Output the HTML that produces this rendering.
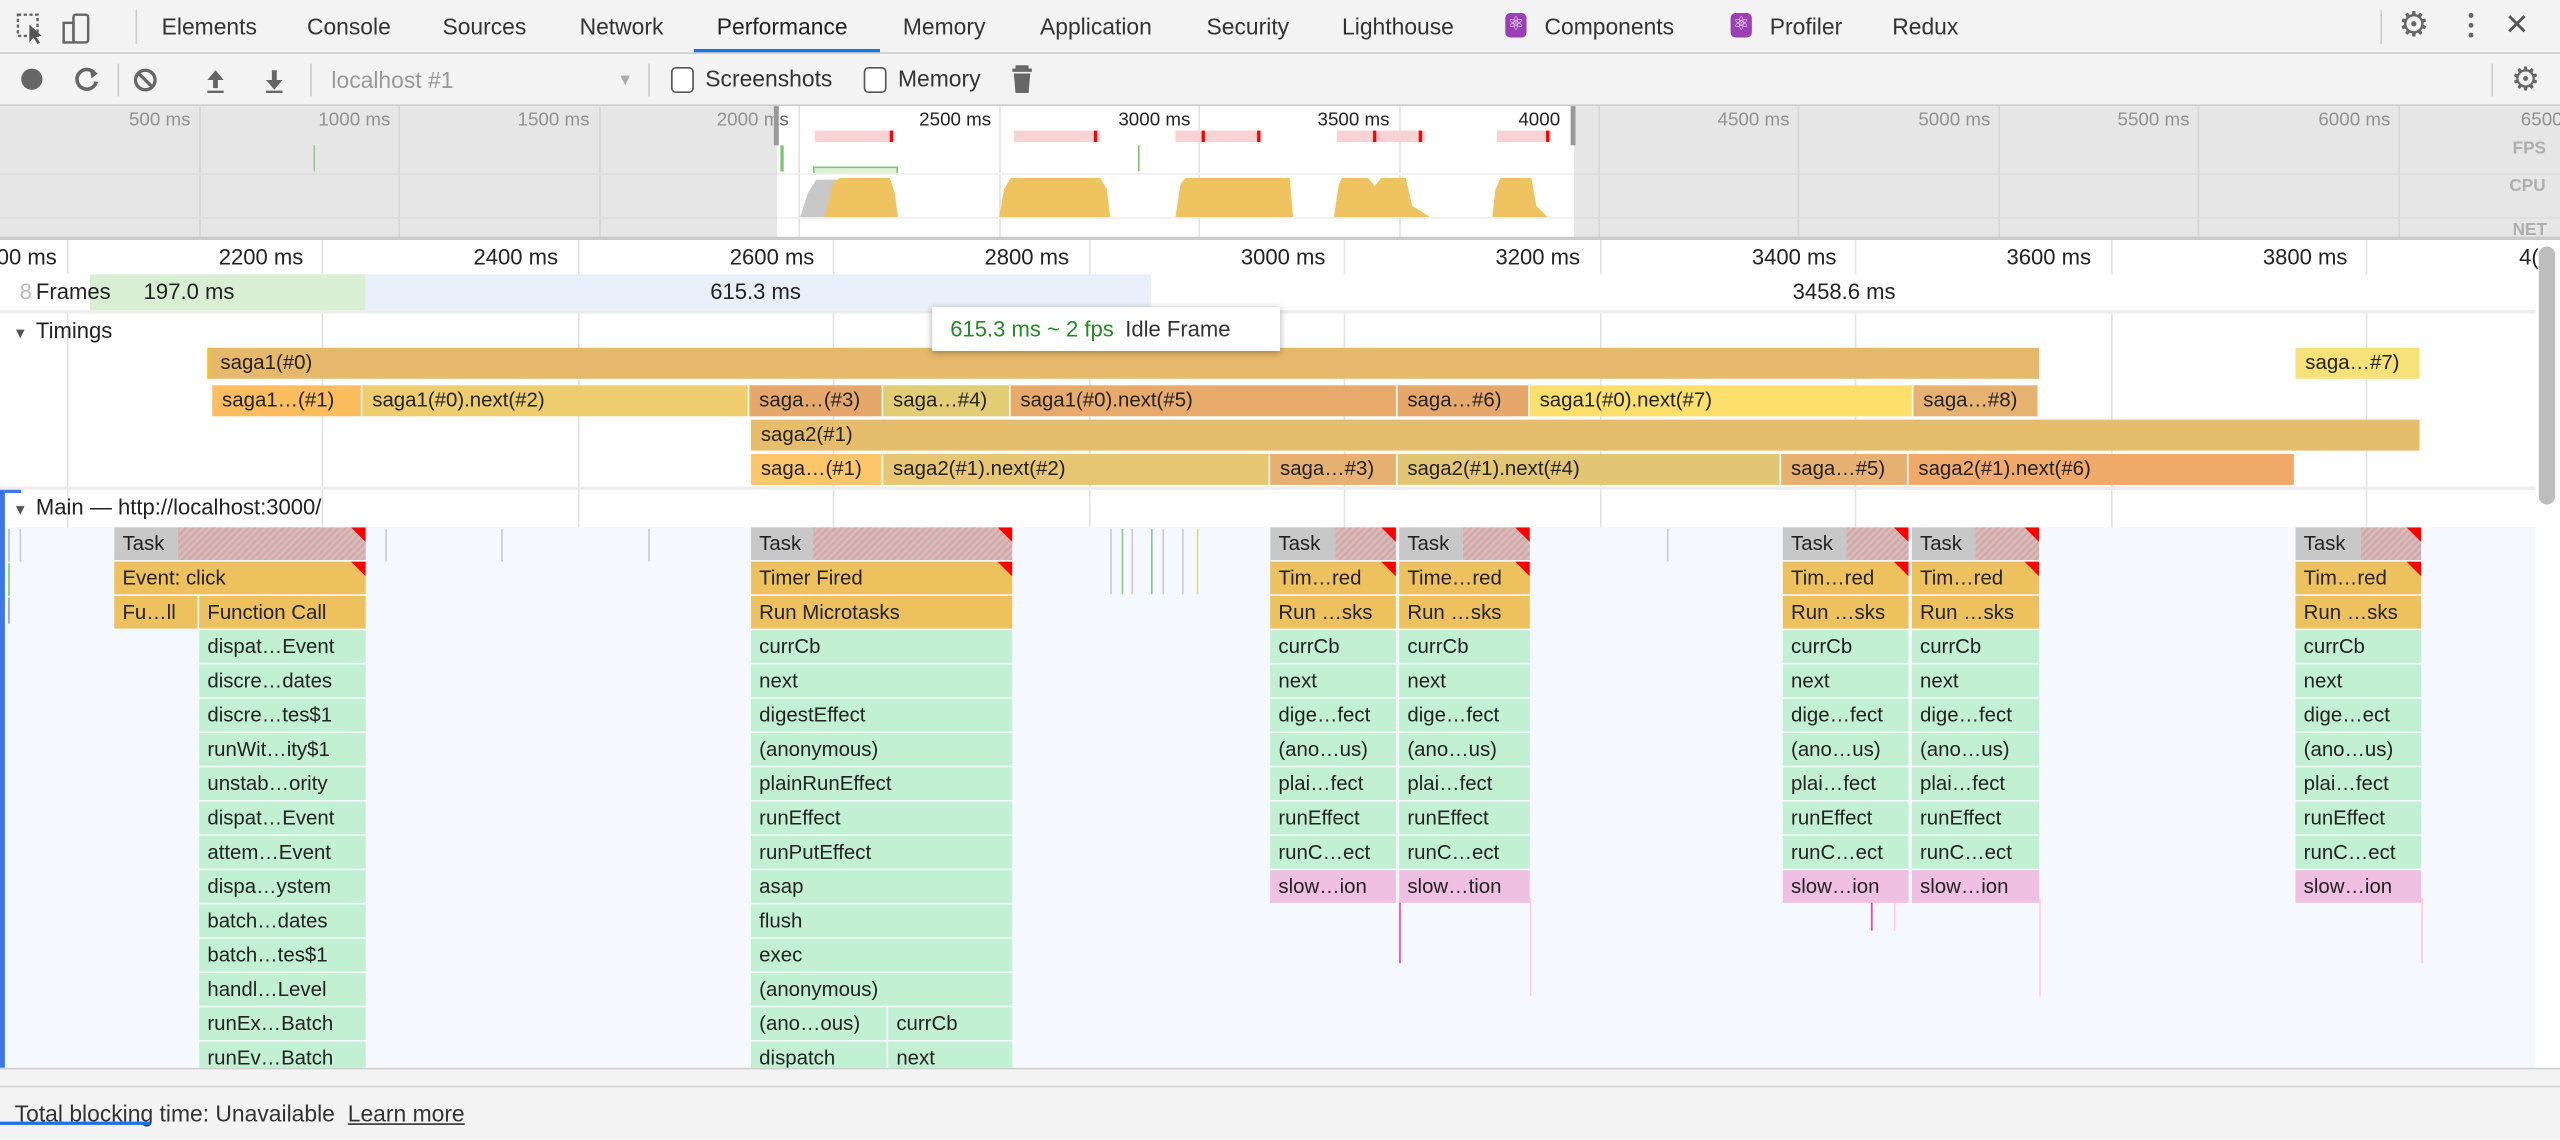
<!DOCTYPE html>
<html><head><meta charset="utf-8"><style>
html,body{margin:0;padding:0;width:2560px;height:1140px;overflow:hidden;background:#fff}
#w{position:absolute;left:0;top:0;width:1568px;height:698px;transform:scale(1.63265);transform-origin:0 0;font-family:"Liberation Sans",sans-serif;overflow:hidden;background:#fff}
.a{position:absolute}
.tab{position:absolute;top:0;height:32px;line-height:32px;font-size:14px;color:#333}
.g{position:absolute;width:1px;background:#e2e2e2}
.b{position:absolute;height:20px;line-height:20px;font-size:12.5px;padding-left:5px;box-sizing:border-box;overflow:hidden;white-space:nowrap;color:#222}
.t{background:#c8c8c8}
.h{background:repeating-linear-gradient(135deg,#e1a2a2 0 1.5px,#c9c2c2 1.5px 3px)}
.y{background:#edc15e}
.gr{background:#c2f0d3}
.p{background:#efc0e2}
.rt{position:absolute;right:0;top:0;width:0;height:0;border-left:9px solid transparent;border-top:9px solid #f00}
.ol{position:absolute;top:68px;font-size:11.5px;color:#666}
.tl{position:absolute;top:150px;font-size:13.5px;color:#222}
.ti{position:absolute;height:19px;line-height:19px;font-size:12.5px;padding-left:6px;box-sizing:border-box;overflow:hidden;white-space:nowrap;color:#222;border-right:1px solid #fff}
</style></head><body><div id="w">
<!-- tab bar -->
<div class="a" style="left:0;top:0;width:1568px;height:32px;background:#f3f3f3;border-bottom:1px solid #cbcbcb"></div>
<svg class="a" style="left:8px;top:7px" width="60" height="20"><rect x="3" y="2" width="12" height="13" fill="none" stroke="#666" stroke-width="1.5" stroke-dasharray="2 1.5"/><path d="M10 8 L10 19 L12.5 16 L15 20 L16.5 19 L14 15.5 L17.5 15 Z" fill="#555"/><rect x="37" y="2" width="9" height="17" rx="1.5" fill="none" stroke="#666" stroke-width="1.5"/><rect x="31" y="7" width="6" height="12" fill="none" stroke="#666" stroke-width="1.5"/></svg>
<div class="a" style="left:83px;top:6px;width:1px;height:21px;background:#ccc"></div>
<div class="tab" style="left:99px">Elements</div>
<div class="tab" style="left:188px">Console</div>
<div class="tab" style="left:271px">Sources</div>
<div class="tab" style="left:355px">Network</div>
<div class="tab" style="left:439px;color:#222">Performance</div>
<div class="a" style="left:425px;top:30px;width:114px;height:2px;background:#1a73e8"></div>
<div class="tab" style="left:553px">Memory</div>
<div class="tab" style="left:637px">Application</div>
<div class="tab" style="left:739px">Security</div>
<div class="tab" style="left:822px">Lighthouse</div>
<div class="a" style="left:922px;top:8px;width:13px;height:15px;border-radius:3px;background:#9b3fb5;color:#fff;font-size:11px;line-height:15px;text-align:center">⚛</div>
<div class="tab" style="left:946px">Components</div>
<div class="a" style="left:1060px;top:8px;width:13px;height:15px;border-radius:3px;background:#9b3fb5;color:#fff;font-size:11px;line-height:15px;text-align:center">⚛</div>
<div class="tab" style="left:1084px">Profiler</div>
<div class="tab" style="left:1159px">Redux</div>
<div class="a" style="left:1458px;top:6px;width:1px;height:21px;background:#ccc"></div>
<div class="a" style="left:1469px;top:3px;font-size:21px;color:#666">⚙</div>
<div class="a" style="left:1512px;top:8px;width:3px;height:3px;background:#666;border-radius:2px;box-shadow:0 6px 0 #666,0 12px 0 #666"></div>
<div class="a" style="left:1534px;top:5px;font-size:18px;color:#555">✕</div>
<!-- toolbar -->
<div class="a" style="left:0;top:33px;width:1568px;height:31px;background:#f3f3f3;border-bottom:1px solid #cbcbcb"></div>
<div class="a" style="left:13px;top:42px;width:13px;height:13px;border-radius:50%;background:#666"></div>
<svg class="a" style="left:45px;top:40px" width="140" height="18"><path d="M13 5 A6 6 0 1 0 14 10" fill="none" stroke="#666" stroke-width="2.2"/><path d="M10 2 L15 5 L11 8Z" fill="#666"/><circle cx="44" cy="9" r="6" fill="none" stroke="#666" stroke-width="2"/><path d="M40 5 L48 13" stroke="#666" stroke-width="2"/><path d="M87 3 L82 9 L85.5 9 L85.5 14 L88.5 14 L88.5 9 L92 9Z M82 15.5 h10 v1.5 h-10z" fill="#666"/><path d="M123 15 L118 9 L121.5 9 L121.5 3 L124.5 3 L124.5 9 L128 9Z M118 15.5 h10 v1.5 h-10z" fill="#666"/></svg>
<div class="a" style="left:72px;top:39px;width:1px;height:20px;background:#ccc"></div>
<div class="a" style="left:190px;top:39px;width:1px;height:20px;background:#ccc"></div>
<div class="a" style="left:203px;top:41px;font-size:14px;color:#999">localhost #1</div>
<div class="a" style="left:378px;top:44px;font-size:10px;color:#aaa">▼</div>
<div class="a" style="left:397px;top:39px;width:1px;height:20px;background:#ccc"></div>
<div class="a" style="left:411px;top:41px;width:12px;height:14px;border:1px solid #555;border-radius:3px;background:#fff"></div>
<div class="a" style="left:432px;top:40px;font-size:14px;color:#333">Screenshots</div>
<div class="a" style="left:529px;top:41px;width:12px;height:14px;border:1px solid #555;border-radius:3px;background:#fff"></div>
<div class="a" style="left:550px;top:40px;font-size:14px;color:#333">Memory</div>
<svg class="a" style="left:620px;top:39px" width="14" height="20"><rect x="2" y="1" width="8" height="2" fill="#666"/><rect x="0" y="3" width="12" height="2" fill="#666"/><path d="M1 6 h10 l-1 12 h-8z" fill="#666"/></svg>
<div class="a" style="left:1526px;top:39px;width:1px;height:20px;background:#ccc"></div>
<div class="a" style="left:1538px;top:36px;font-size:20px;color:#666">⚙</div>
<!-- overview -->
<div class="a" style="left:0;top:65px;width:1568px;height:81px;background:#fff"></div>
<div class="g" style="left:122px;top:65px;height:81px"></div><div class="g" style="left:244px;top:65px;height:81px"></div><div class="g" style="left:367px;top:65px;height:81px"></div><div class="g" style="left:489px;top:65px;height:81px"></div><div class="g" style="left:612px;top:65px;height:81px"></div><div class="g" style="left:734px;top:65px;height:81px"></div><div class="g" style="left:857px;top:65px;height:81px"></div><div class="g" style="left:979px;top:65px;height:81px"></div><div class="g" style="left:1101px;top:65px;height:81px"></div><div class="g" style="left:1224px;top:65px;height:81px"></div><div class="g" style="left:1346px;top:65px;height:81px"></div><div class="g" style="left:1469px;top:65px;height:81px"></div>
<div class="ol" style="left:79px">500 ms</div><div class="ol" style="left:195px">1000 ms</div><div class="ol" style="left:317px">1500 ms</div><div class="ol" style="left:439px">2000 ms</div><div class="ol" style="left:563px;color:#222">2500 ms</div><div class="ol" style="left:685px;color:#222">3000 ms</div><div class="ol" style="left:807px;color:#222">3500 ms</div><div class="ol" style="left:930px;color:#222">4000</div><div class="ol" style="left:1052px">4500 ms</div><div class="ol" style="left:1175px">5000 ms</div><div class="ol" style="left:1297px">5500 ms</div><div class="ol" style="left:1420px">6000 ms</div><div class="ol" style="left:1544px">6500</div>
<!-- fps red bars -->
<div class="a" style="left:499px;top:80px;width:49px;height:7px;background:#f8d2d4"></div><div class="a" style="left:545px;top:80px;width:2px;height:7px;background:#f00"></div>
<div class="a" style="left:621px;top:80px;width:53px;height:7px;background:#f8d2d4"></div><div class="a" style="left:670px;top:80px;width:2px;height:7px;background:#f00"></div>
<div class="a" style="left:720px;top:80px;width:53px;height:7px;background:#f8d2d4"></div><div class="a" style="left:736px;top:80px;width:2px;height:7px;background:#f00"></div><div class="a" style="left:770px;top:80px;width:2px;height:7px;background:#f00"></div>
<div class="a" style="left:819px;top:80px;width:54px;height:7px;background:#f8d2d4"></div><div class="a" style="left:841px;top:80px;width:2px;height:7px;background:#f00"></div><div class="a" style="left:869px;top:80px;width:2px;height:7px;background:#f00"></div>
<div class="a" style="left:917px;top:80px;width:33px;height:7px;background:#f8d2d4"></div><div class="a" style="left:947px;top:80px;width:2px;height:7px;background:#f00"></div>
<div class="a" style="left:192px;top:89px;width:1px;height:16px;background:#7bc86a"></div>
<div class="a" style="left:478px;top:89px;width:2px;height:16px;background:#7bc86a"></div>
<div class="a" style="left:697px;top:89px;width:1px;height:16px;background:#7bc86a"></div>
<div class="a" style="left:498px;top:102px;width:50px;height:4px;border:1px solid #7bc86a;border-bottom:none;background:#dff2d9"></div>
<div class="a" style="left:0;top:106px;width:1568px;height:1px;background:#eee"></div>
<div class="a" style="left:0;top:133px;width:1568px;height:1px;background:#eee"></div>
<!-- cpu -->
<svg class="a" style="left:0;top:108px" width="1568" height="26"><path d="M490 25 L495 10 L500 2 L514 2 L514 25Z" fill="#c8c8c8"/><path d="M505 25 L510 5 L514 1 L545 1 L548 10 L550 25Z" fill="#efc35f"/><path d="M612 25 L615 8 L619 1 L674 1 L678 8 L680 25Z" fill="#efc35f"/><path d="M720 25 L723 5 L726 1 L790 1 L792 25Z" fill="#efc35f"/><path d="M817 25 L820 5 L822 1 L838 1 L842 6 L846 1 L861 1 L865 18 L876 25Z" fill="#efc35f"/><path d="M914 25 L916 8 L919 1 L938 1 L941 18 L948 25Z" fill="#efc35f"/></svg>
<div class="a" style="left:1539px;top:85px;font-size:10.5px;font-weight:bold;color:#999">FPS</div>
<div class="a" style="left:1537px;top:108px;font-size:10.5px;font-weight:bold;color:#999">CPU</div>
<div class="a" style="left:1539px;top:135px;font-size:10.5px;font-weight:bold;color:#999">NET</div>
<!-- dim overlays -->
<div class="a" style="left:0;top:65px;width:476px;height:81px;background:rgba(200,200,200,0.45)"></div>
<div class="a" style="left:964px;top:65px;width:604px;height:81px;background:rgba(200,200,200,0.45)"></div>
<div class="a" style="left:474px;top:65px;width:3px;height:24px;background:#999"></div>
<div class="a" style="left:962px;top:65px;width:3px;height:24px;background:#999"></div>
<div class="a" style="left:0;top:145px;width:1568px;height:2px;background:#cbcbcb"></div>
<!-- main area gridlines -->
<div class="g" style="left:41px;top:147px;height:508px"></div><div class="g" style="left:197px;top:147px;height:508px"></div><div class="g" style="left:354px;top:147px;height:508px"></div><div class="g" style="left:510px;top:147px;height:508px"></div><div class="g" style="left:667px;top:147px;height:508px"></div><div class="g" style="left:823px;top:147px;height:508px"></div><div class="g" style="left:980px;top:147px;height:508px"></div><div class="g" style="left:1136px;top:147px;height:508px"></div><div class="g" style="left:1293px;top:147px;height:508px"></div><div class="g" style="left:1449px;top:147px;height:508px"></div>
<div class="tl" style="left:-2px">00 ms</div><div class="tl" style="left:134px">2200 ms</div><div class="tl" style="left:290px">2400 ms</div><div class="tl" style="left:447px">2600 ms</div><div class="tl" style="left:603px">2800 ms</div><div class="tl" style="left:760px">3000 ms</div><div class="tl" style="left:916px">3200 ms</div><div class="tl" style="left:1073px">3400 ms</div><div class="tl" style="left:1229px">3600 ms</div><div class="tl" style="left:1386px">3800 ms</div><div class="tl" style="left:1543px">4(</div>
<!-- frames -->
<div class="a" style="left:0;top:168px;width:1553px;height:22px;background:#fff"></div>
<div class="a" style="left:55px;top:168px;width:169px;height:22px;background:#d8efd4"></div>
<div class="a" style="left:224px;top:168px;width:481px;height:22px;background:#e9f0fb"></div>
<div class="a" style="left:88px;top:171px;font-size:13.5px;color:#222">197.0 ms</div>
<div class="a" style="left:435px;top:171px;font-size:13.5px;color:#222">615.3 ms</div>
<div class="a" style="left:1098px;top:171px;font-size:13.5px;color:#222">3458.6 ms</div>
<div class="a" style="left:3px;top:168px;width:52px;height:22px;background:#fff"></div>
<div class="a" style="left:12px;top:171px;font-size:13.5px;color:#bbb">8</div>
<div class="a" style="left:22px;top:171px;font-size:13.5px;color:#222">Frames</div>
<div class="a" style="left:0;top:190px;width:1553px;height:2px;background:#ececec"></div>
<!-- timings -->
<div class="a" style="left:8px;top:199px;font-size:9px;color:#555">▼</div>
<div class="a" style="left:22px;top:195px;font-size:13.5px;color:#222">Timings</div>
<div class="ti" style="left:127px;top:213px;width:1123px;background:#e6b86b;border-left:2px solid #f0c030">saga1(#0)</div>
<div class="ti" style="left:1406px;top:213px;width:77px;background:#f7e27a">saga…#7)</div>
<div class="ti" style="left:130px;top:236px;width:92px;background:#fcbd5f">saga1…(#1)</div>
<div class="ti" style="left:222px;top:236px;width:237px;background:#edcd6e">saga1(#0).next(#2)</div>
<div class="ti" style="left:459px;top:236px;width:82px;background:#e6a86a">saga…(#3)</div>
<div class="ti" style="left:541px;top:236px;width:78px;background:#e2cc74">saga…#4)</div>
<div class="ti" style="left:619px;top:236px;width:237px;background:#e7aa6b">saga1(#0).next(#5)</div>
<div class="ti" style="left:856px;top:236px;width:81px;background:#e6a86a">saga…#6)</div>
<div class="ti" style="left:937px;top:236px;width:235px;background:#fde06b">saga1(#0).next(#7)</div>
<div class="ti" style="left:1172px;top:236px;width:77px;background:#e6b270">saga…#8)</div>
<div class="ti" style="left:460px;top:257px;width:1023px;background:#e6bd6b">saga2(#1)</div>
<div class="ti" style="left:460px;top:278px;width:81px;background:#fdc66b">saga…(#1)</div>
<div class="ti" style="left:541px;top:278px;width:237px;background:#e6c672">saga2(#1).next(#2)</div>
<div class="ti" style="left:778px;top:278px;width:78px;background:#e6b070">saga…#3)</div>
<div class="ti" style="left:856px;top:278px;width:235px;background:#e2c674">saga2(#1).next(#4)</div>
<div class="ti" style="left:1091px;top:278px;width:78px;background:#e6b070">saga…#5)</div>
<div class="ti" style="left:1169px;top:278px;width:237px;background:#f0a968">saga2(#1).next(#6)</div>
<!-- tooltip -->
<div class="a" style="left:571px;top:188px;width:213px;height:27px;background:#fff;box-shadow:0 1px 4px rgba(0,0,0,0.35);font-size:13.5px;line-height:27px;white-space:nowrap"><span style="margin-left:11px;color:#228b22">615.3 ms ~ 2 fps</span><span style="margin-left:7px;color:#333">Idle Frame</span></div>
<div class="a" style="left:0;top:298px;width:1553px;height:2px;background:#ececec"></div>
<!-- main -->
<div class="a" style="left:8px;top:307px;font-size:9px;color:#555">▼</div>
<div class="a" style="left:22px;top:303px;font-size:13.5px;color:#222">Main — http://localhost:3000/</div>
<div class="a" style="left:0;top:323px;width:1553px;height:332px;background:#f5f8fd"></div>
<div class="a" style="left:0;top:300px;width:3px;height:355px;background:#3b78e7"></div>
<div class="a" style="left:3px;top:300px;width:10px;height:2px;background:#3b78e7"></div>
<!-- small ticks -->
<div class="a" style="left:5px;top:324px;width:1px;height:20px;background:#bbb"></div><div class="a" style="left:12px;top:324px;width:1px;height:20px;background:#ccc"></div><div class="a" style="left:5px;top:345px;width:1px;height:20px;background:#7bc86a"></div><div class="a" style="left:5px;top:366px;width:1px;height:16px;background:#99c"></div>
<div class="a" style="left:236px;top:324px;width:1px;height:20px;background:#ccc"></div><div class="a" style="left:307px;top:324px;width:1px;height:20px;background:#ccc"></div><div class="a" style="left:397px;top:324px;width:1px;height:20px;background:#ccc"></div>
<div class="a" style="left:680px;top:324px;width:1px;height:40px;background:#ccc"></div><div class="a" style="left:687px;top:324px;width:1px;height:40px;background:#8c8"></div><div class="a" style="left:693px;top:324px;width:1px;height:40px;background:#ccc"></div><div class="a" style="left:705px;top:324px;width:1px;height:40px;background:#8c8"></div><div class="a" style="left:712px;top:324px;width:1px;height:40px;background:#ccc"></div><div class="a" style="left:724px;top:324px;width:1px;height:40px;background:#ccc"></div><div class="a" style="left:733px;top:324px;width:1px;height:40px;background:#dd8"></div><div class="a" style="left:1021px;top:324px;width:1px;height:20px;background:#ccc"></div>
<div class="a" style="left:857px;top:550px;width:1px;height:40px;background:#f3c"></div><div class="a" style="left:937px;top:550px;width:1px;height:60px;background:#fcd"></div><div class="a" style="left:1146px;top:550px;width:1px;height:20px;background:#f3c"></div><div class="a" style="left:1160px;top:550px;width:1px;height:20px;background:#fcd"></div><div class="a" style="left:1249px;top:550px;width:1px;height:60px;background:#fcd"></div><div class="a" style="left:1483px;top:550px;width:1px;height:40px;background:#fcd"></div>
<!-- column A -->
<div class="b t" style="left:70px;top:323px;width:39px">Task</div><div class="b h" style="left:109px;top:323px;width:115px"><div class="rt"></div></div>
<div class="b y" style="left:70px;top:344px;width:154px">Event: click<div class="rt"></div></div>
<div class="b y" style="left:70px;top:365px;width:51px">Fu…ll</div><div class="b y" style="left:122px;top:365px;width:102px">Function Call</div>
<div class="b gr" style="left:122px;top:386px;width:102px">dispat…Event</div>
<div class="b gr" style="left:122px;top:407px;width:102px">discre…dates</div>
<div class="b gr" style="left:122px;top:428px;width:102px">discre…tes$1</div>
<div class="b gr" style="left:122px;top:449px;width:102px">runWit…ity$1</div>
<div class="b gr" style="left:122px;top:470px;width:102px">unstab…ority</div>
<div class="b gr" style="left:122px;top:491px;width:102px">dispat…Event</div>
<div class="b gr" style="left:122px;top:512px;width:102px">attem…Event</div>
<div class="b gr" style="left:122px;top:533px;width:102px">dispa…ystem</div>
<div class="b gr" style="left:122px;top:554px;width:102px">batch…dates</div>
<div class="b gr" style="left:122px;top:575px;width:102px">batch…tes$1</div>
<div class="b gr" style="left:122px;top:596px;width:102px">handl…Level</div>
<div class="b gr" style="left:122px;top:617px;width:102px">runEx…Batch</div>
<div class="b gr" style="left:122px;top:638px;width:102px">runEv…Batch</div>
<!-- column B -->
<div class="b t" style="left:460px;top:323px;width:38px">Task</div><div class="b h" style="left:498px;top:323px;width:122px"><div class="rt"></div></div>
<div class="b y" style="left:460px;top:344px;width:160px">Timer Fired<div class="rt"></div></div>
<div class="b y" style="left:460px;top:365px;width:160px">Run Microtasks</div>
<div class="b gr" style="left:460px;top:386px;width:160px">currCb</div>
<div class="b gr" style="left:460px;top:407px;width:160px">next</div>
<div class="b gr" style="left:460px;top:428px;width:160px">digestEffect</div>
<div class="b gr" style="left:460px;top:449px;width:160px">(anonymous)</div>
<div class="b gr" style="left:460px;top:470px;width:160px">plainRunEffect</div>
<div class="b gr" style="left:460px;top:491px;width:160px">runEffect</div>
<div class="b gr" style="left:460px;top:512px;width:160px">runPutEffect</div>
<div class="b gr" style="left:460px;top:533px;width:160px">asap</div>
<div class="b gr" style="left:460px;top:554px;width:160px">flush</div>
<div class="b gr" style="left:460px;top:575px;width:160px">exec</div>
<div class="b gr" style="left:460px;top:596px;width:160px">(anonymous)</div>
<div class="b gr" style="left:460px;top:617px;width:83px">(ano…ous)</div><div class="b gr" style="left:544px;top:617px;width:76px">currCb</div>
<div class="b gr" style="left:460px;top:638px;width:83px">dispatch</div><div class="b gr" style="left:544px;top:638px;width:76px">next</div>
<!-- columns C-G -->
<div class="b t" style="left:778px;top:323px;width:40px">Task</div><div class="b h" style="left:818px;top:323px;width:37px"><div class="rt"></div></div>
<div class="b y" style="left:778px;top:344px;width:77px">Tim…red<div class="rt"></div></div>
<div class="b y" style="left:778px;top:365px;width:77px">Run …sks</div>
<div class="b gr" style="left:778px;top:386px;width:77px">currCb</div>
<div class="b gr" style="left:778px;top:407px;width:77px">next</div>
<div class="b gr" style="left:778px;top:428px;width:77px">dige…fect</div>
<div class="b gr" style="left:778px;top:449px;width:77px">(ano…us)</div>
<div class="b gr" style="left:778px;top:470px;width:77px">plai…fect</div>
<div class="b gr" style="left:778px;top:491px;width:77px">runEffect</div>
<div class="b gr" style="left:778px;top:512px;width:77px">runC…ect</div>
<div class="b p" style="left:778px;top:533px;width:77px">slow…ion</div>

<div class="b t" style="left:857px;top:323px;width:39px">Task</div><div class="b h" style="left:896px;top:323px;width:41px"><div class="rt"></div></div>
<div class="b y" style="left:857px;top:344px;width:80px">Time…red<div class="rt"></div></div>
<div class="b y" style="left:857px;top:365px;width:80px">Run …sks</div>
<div class="b gr" style="left:857px;top:386px;width:80px">currCb</div>
<div class="b gr" style="left:857px;top:407px;width:80px">next</div>
<div class="b gr" style="left:857px;top:428px;width:80px">dige…fect</div>
<div class="b gr" style="left:857px;top:449px;width:80px">(ano…us)</div>
<div class="b gr" style="left:857px;top:470px;width:80px">plai…fect</div>
<div class="b gr" style="left:857px;top:491px;width:80px">runEffect</div>
<div class="b gr" style="left:857px;top:512px;width:80px">runC…ect</div>
<div class="b p" style="left:857px;top:533px;width:80px">slow…tion</div>

<div class="b t" style="left:1092px;top:323px;width:39px">Task</div><div class="b h" style="left:1131px;top:323px;width:38px"><div class="rt"></div></div>
<div class="b y" style="left:1092px;top:344px;width:77px">Tim…red<div class="rt"></div></div>
<div class="b y" style="left:1092px;top:365px;width:77px">Run …sks</div>
<div class="b gr" style="left:1092px;top:386px;width:77px">currCb</div>
<div class="b gr" style="left:1092px;top:407px;width:77px">next</div>
<div class="b gr" style="left:1092px;top:428px;width:77px">dige…fect</div>
<div class="b gr" style="left:1092px;top:449px;width:77px">(ano…us)</div>
<div class="b gr" style="left:1092px;top:470px;width:77px">plai…fect</div>
<div class="b gr" style="left:1092px;top:491px;width:77px">runEffect</div>
<div class="b gr" style="left:1092px;top:512px;width:77px">runC…ect</div>
<div class="b p" style="left:1092px;top:533px;width:77px">slow…ion</div>

<div class="b t" style="left:1171px;top:323px;width:39px">Task</div><div class="b h" style="left:1210px;top:323px;width:39px"><div class="rt"></div></div>
<div class="b y" style="left:1171px;top:344px;width:78px">Tim…red<div class="rt"></div></div>
<div class="b y" style="left:1171px;top:365px;width:78px">Run …sks</div>
<div class="b gr" style="left:1171px;top:386px;width:78px">currCb</div>
<div class="b gr" style="left:1171px;top:407px;width:78px">next</div>
<div class="b gr" style="left:1171px;top:428px;width:78px">dige…fect</div>
<div class="b gr" style="left:1171px;top:449px;width:78px">(ano…us)</div>
<div class="b gr" style="left:1171px;top:470px;width:78px">plai…fect</div>
<div class="b gr" style="left:1171px;top:491px;width:78px">runEffect</div>
<div class="b gr" style="left:1171px;top:512px;width:78px">runC…ect</div>
<div class="b p" style="left:1171px;top:533px;width:78px">slow…ion</div>

<div class="b t" style="left:1406px;top:323px;width:40px">Task</div><div class="b h" style="left:1446px;top:323px;width:37px"><div class="rt"></div></div>
<div class="b y" style="left:1406px;top:344px;width:77px">Tim…red<div class="rt"></div></div>
<div class="b y" style="left:1406px;top:365px;width:77px">Run …sks</div>
<div class="b gr" style="left:1406px;top:386px;width:77px">currCb</div>
<div class="b gr" style="left:1406px;top:407px;width:77px">next</div>
<div class="b gr" style="left:1406px;top:428px;width:77px">dige…ect</div>
<div class="b gr" style="left:1406px;top:449px;width:77px">(ano…us)</div>
<div class="b gr" style="left:1406px;top:470px;width:77px">plai…fect</div>
<div class="b gr" style="left:1406px;top:491px;width:77px">runEffect</div>
<div class="b gr" style="left:1406px;top:512px;width:77px">runC…ect</div>
<div class="b p" style="left:1406px;top:533px;width:77px">slow…ion</div>
<!-- scrollbar -->
<div class="a" style="left:1555px;top:151px;width:10px;height:158px;border-radius:5px;background:#bdbdbd"></div>
<!-- bottom -->
<div class="a" style="left:0;top:654px;width:1568px;height:44px;background:#f3f3f3;border-top:1px solid #d0d0d0"></div>
<div class="a" style="left:0;top:665px;width:1568px;height:1px;background:#d4d4d4"></div>
<div class="a" style="left:9px;top:674px;font-size:14px;color:#333;white-space:nowrap">Total blocking time: Unavailable <span style="margin-left:4px;text-decoration:underline">Learn more</span></div>
<div class="a" style="left:0;top:687px;width:92px;height:2px;background:#1a73e8"></div>
</div></body></html>
